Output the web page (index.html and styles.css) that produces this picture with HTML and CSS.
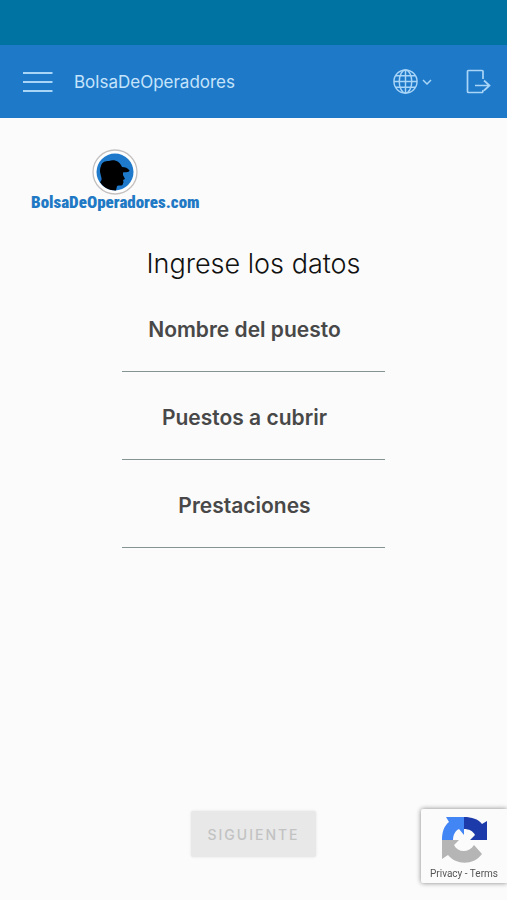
FILE: index.html
```html
<!DOCTYPE html>
<html lang="es">
<head>
  <meta charset="UTF-8">
  <meta name="viewport" content="width=device-width, initial-scale=1">
  <title>BolsaDeOperadores</title>
  <link rel="stylesheet" href="styles.css">
</head>
<body>

<div class="status-bar"></div>

<header class="toolbar">
  <button class="icon-btn" type="button" aria-label="Menu">
    <svg width="30" height="22" viewBox="0 0 30 22" fill="none" stroke="currentColor" stroke-width="2">
      <path d="M0 2H29.500M0 11H29.500M0 20H29.500"/>
    </svg>
  </button>
  <span class="toolbar-title">BolsaDeOperadores</span>
  <button class="icon-btn language" type="button" aria-label="Idioma">
    <svg width="25" height="25" viewBox="0 0 26 26" fill="none" stroke="currentColor" stroke-width="1.500">
      <circle cx="13" cy="13" r="12"/>
      <ellipse cx="13" cy="13" rx="6.500" ry="12"/>
      <path d="M13 1V25M1 13H25M3 7H23M3 19H23"/>
    </svg>
    <svg width="10" height="6" viewBox="0 0 10 6" fill="none" stroke="currentColor" stroke-width="1.500">
      <path d="M1 1L5 5L9 1"/>
    </svg>
  </button>
  <button class="icon-btn" type="button" aria-label="Salir">
    <svg width="25" height="25" viewBox="0 0 25 25" fill="none" stroke="currentColor" stroke-width="1.700">
      <path d="M17 10V2.500Q17 1.500 16 1.500H2.500Q1.500 1.500 1.500 2.500V22.500Q1.500 23.500 2.500 23.500H16Q17 23.500 17 21"/>
      <path d="M9 16.500H23.500M18 11.500L23.500 16.500L18 21.500"/>
    </svg>
  </button>
</header>

<main class="content">
  <a class="logo" href="#">
    <svg width="46" height="46" viewBox="0 0 46 46">
      <circle cx="23" cy="23" r="22" fill="#fff" stroke="#c4c0c0" stroke-width="1.300"/>
      <circle cx="23" cy="23" r="18.500" fill="#1f7acb"/>
      <path d="M9 17C10 13 13 12 17 12C23 10 28 13 30 18C33 18 36 19 37.500 21.500C37 23.500 34 23 31 23.500L31 26L33 30L31 31L31.500 33L30.500 36C29 37 27 36 25 37L24 41.500C17 41.500 11 38 8 33C11 31 9 28 8.500 25C7.500 22 8 19 9 17Z" fill="#000"/>
    </svg>
    <span class="logo-text">BolsaDeOperadores.com</span>
  </a>

  <form class="form">
    <h1 class="form-title">Ingrese los datos</h1>
    <div class="field">
      <label for="puesto">Nombre del puesto</label>
      <input id="puesto" type="text">
    </div>
    <div class="field">
      <label for="cubrir">Puestos a cubrir</label>
      <input id="cubrir" type="text">
    </div>
    <div class="field">
      <label for="prestaciones">Prestaciones</label>
      <input id="prestaciones" type="text">
    </div>
    <button class="next-btn" type="submit" disabled>SIGUIENTE</button>
  </form>
</main>

<aside class="recaptcha">
  <svg width="46" height="48" viewBox="0 0 46 48">
    <path d="M23 1C31 1 37 3 41 8L46 5V24H29L34 19C32 15 28 13 23 13Z" fill="#1c3aa9"/>
    <path d="M23 1V19L18 13C14 15 12 19 12 24H1C1 16 3 10 8 6L5 1Z" fill="#4285f4"/>
    <path d="M1 24H18L13 29C17 37 28 37 33 29L41 38C32 50 15 49 7 39L1 43Z" fill="#b5b5b5"/>
  </svg>
  <div class="recaptcha-links"><a href="#">Privacy</a> - <a href="#">Terms</a></div>
</aside>

</body>
</html>
```
FILE: styles.css
```css
* {
  box-sizing: border-box;
}

body {
  margin: 0;
  min-height: 100vh;
  display: flex;
  flex-direction: column;
  background: #fbfbfb;
  font-family: Inter, "Open Sans", sans-serif;
}

button {
  font-family: inherit;
}

.status-bar {
  height: 45px;
  background: #0073a3;
}

.toolbar {
  display: flex;
  align-items: center;
  height: 73px;
  padding: 0 16px 0 23px;
  background: #1f79c9;
  color: #a9d5f7;
}

.icon-btn {
  display: flex;
  align-items: center;
  padding: 0;
  border: 0;
  background: none;
  color: inherit;
  cursor: pointer;
}

.toolbar-title {
  flex: 1;
  margin-left: 21px;
  font-size: 17px;
  color: #c6e4fb;
}

.language {
  gap: 4px;
  margin-right: 34px;
}

.content {
  flex: 1;
  display: flex;
  flex-direction: column;
  padding: 31px 31px 43px;
}

.logo {
  display: flex;
  flex-direction: column;
  align-items: center;
  align-self: flex-start;
  color: #1f79c4;
  text-decoration: none;
}

.logo-text {
  font: 900 17px/14px "Roboto Condensed", Roboto, sans-serif;
}

.form {
  flex: 1;
  display: flex;
  flex-direction: column;
  align-items: center;
}

.form-title {
  margin: 38px 0 36px;
  font-size: 27px;
  font-weight: 300;
  line-height: 34px;
  color: #111;
}

.field {
  display: flex;
  flex-direction: column;
  width: 59%;
  margin-bottom: 33px;
}

.field label {
  padding-right: 18px;
  font-size: 21px;
  font-weight: 600;
  line-height: 26px;
  text-align: center;
  color: #484848;
}

.field input {
  width: 100%;
  height: 29px;
  padding: 0 4px;
  border: 0;
  border-bottom: 1px solid #839493;
  background: none;
  font: inherit;
  font-size: 16px;
  outline: none;
}

.next-btn {
  height: 46px;
  margin-top: auto;
  padding: 0 16px;
  border: 0;
  border-radius: 2px;
  background: #e8e8e8;
  box-shadow: 0 0 3px rgba(0, 0, 0, 0.1);
  color: #c2c2c2;
  font-size: 14px;
  font-weight: 500;
  letter-spacing: 2px;
}

/* reCAPTCHA badge */
.recaptcha {
  position: fixed;
  right: 0;
  bottom: 17px;
  width: 86px;
  height: 74px;
  padding-top: 7px;
  border-radius: 2px 0 0 2px;
  background: #fbfbfb;
  box-shadow: 0 0 5px #808080;
  text-align: center;
}

.recaptcha svg {
  display: block;
  margin: 0 auto;
}

.recaptcha-links {
  font: 10px/20px Roboto, sans-serif;
  color: #555;
}

.recaptcha-links a {
  color: inherit;
  text-decoration: none;
}
```
